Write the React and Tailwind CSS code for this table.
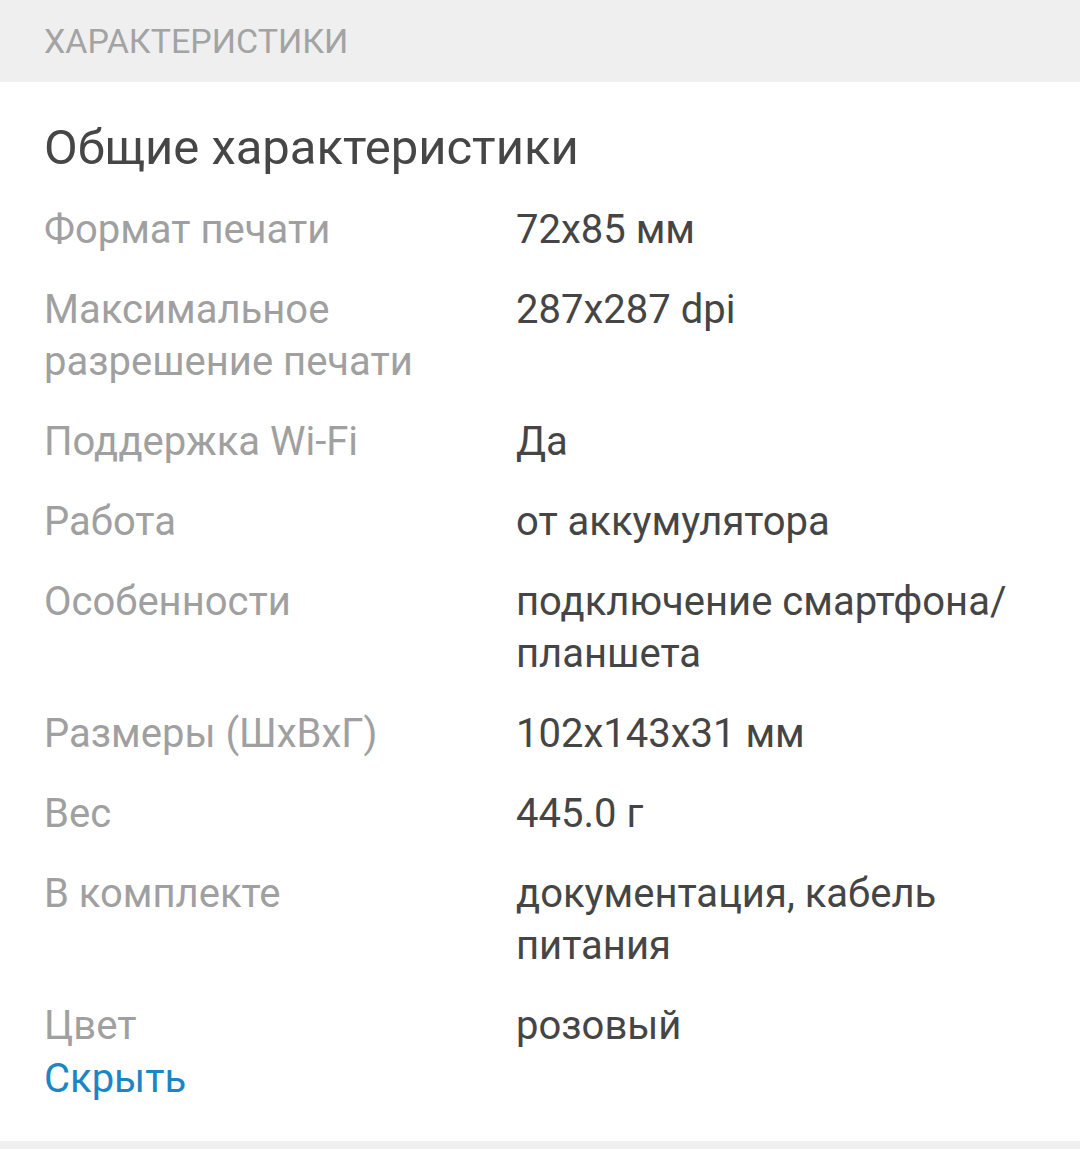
const specs = [
  { label: 'Формат печати', value: '72x85 мм' },
  { label: 'Максимальное разрешение печати', value: '287x287 dpi' },
  { label: 'Поддержка Wi-Fi', value: 'Да' },
  { label: 'Работа', value: 'от аккумулятора' },
  { label: 'Особенности', value: 'подключение смартфона/ планшета' },
  { label: 'Размеры (ШxВxГ)', value: '102x143x31 мм' },
  { label: 'Вес', value: '445.0 г' },
  { label: 'В комплекте', value: 'документация, кабель питания' },
  { label: 'Цвет', value: 'розовый' },
];

export default function App() {
  return (
    <div className="w-[1080px] h-[1150px] bg-white overflow-hidden font-['Roboto',sans-serif]">
      {/* Section header */}
      <div className="h-[82px] bg-[#efefef] flex items-center px-[44px]">
        <h2 className="text-[34px] leading-none text-[#a3a3a3] uppercase">Характеристики</h2>
      </div>

      <div className="px-[44px] pt-[40px] pb-[38px]">
        <h3 className="text-[49px] leading-[52px] text-[#464646]">Общие характеристики</h3>

        <div className="mt-[16px]">
          {specs.map((s, i) => (
            <div
              key={s.label}
              className={'flex text-[40px] leading-[52px] ' + (i === specs.length - 1 ? 'pt-[14px]' : 'py-[14px]')}
            >
              <div className="w-[472px] shrink-0 pr-[24px] text-[#a0a0a0]">{s.label}</div>
              <div className="flex-1 text-[#454545]">{s.value}</div>
            </div>
          ))}
        </div>

        <button className="mt-[3px] text-[40px] leading-[48px] text-[#1a87c4]">Скрыть</button>
      </div>

      <div className="h-[8px] bg-[#efefef]"></div>
    </div>
  );
}
